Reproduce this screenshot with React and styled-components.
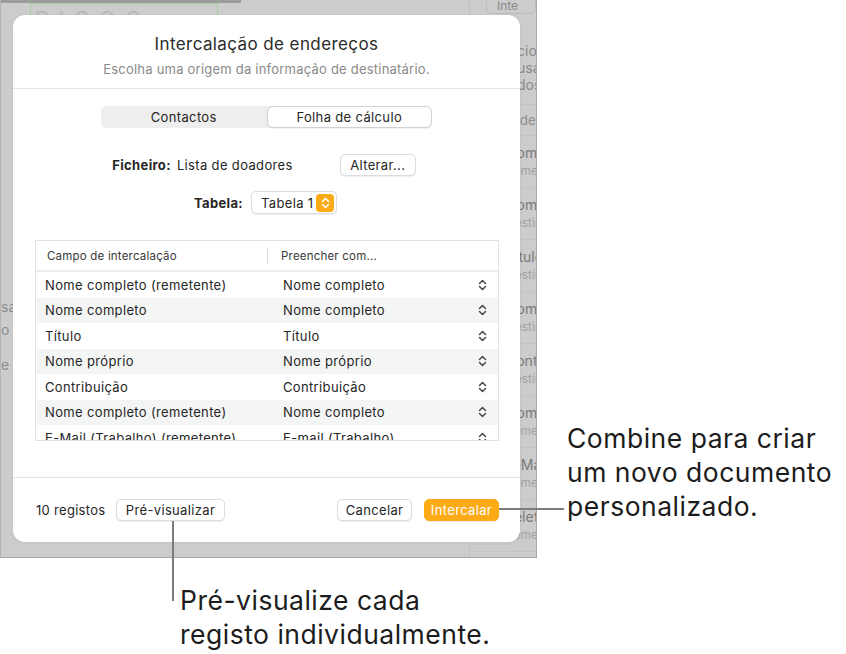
import React from 'react';
import styled, { createGlobalStyle } from 'styled-components';

const GlobalStyle = createGlobalStyle`
  body {
    margin: 0;
    background: #ffffff;
    font-family: Inter, "Liberation Sans", sans-serif;
    color: #262626;
  }
`;

const Stage = styled.div`
  position: relative;
  width: 846px;
  height: 654px;
  overflow: hidden;
  background: #ffffff;
`;

/* the dimmed app behind the sheet */
const Screen = styled.div`
  position: relative;
  width: 535px;
  height: 557px;
  display: flex;
  background: #cccccc;
  border-left: 1px solid #b4b4b4;
  border-right: 1px solid #a8a8a8;
  border-bottom: 1px solid #a8a8a8;
  overflow: hidden;
`;

const Canvas = styled.div`
  flex: 1;
  display: flex;
  flex-direction: column;
`;

const ScrollBar = styled.div`
  width: 240px;
  height: 3px;
  background: #9c9c9c;
`;

const TitleBox = styled.div`
  margin-left: 29px;
  width: 182px;
  height: 30px;
  border: 1px solid #a9c9a3;
  overflow: hidden;
  font-size: 22px;
  letter-spacing: 9px;
  color: #b9b9b9;
  line-height: 30px;
  padding-left: 4px;
`;

const DocFragments = styled.div`
  margin-top: 263px;
  display: flex;
  flex-direction: column;
  gap: 5px;
  font-size: 14px;
  color: #8c8c8c;
  line-height: 18px;
`;

const Sidebar = styled.div`
  width: 66px;
  border-left: 1px solid #c2c2c2;
  display: flex;
  flex-direction: column;
  position: relative;
`;

const SideButton = styled.div`
  margin: -6px 0 0 16px;
  height: 18px;
  border: 1px solid #bdbdbd;
  border-radius: 5px;
  font-size: 12px;
  color: #8a8a8a;
  padding-left: 10px;
  line-height: 22px;
`;

const SideIntro = styled.div`
  margin-top: 28px;
  padding-left: 47px;
  height: 62px;
  font-size: 14px;
  line-height: 17px;
  color: #8a8a8a;
  white-space: nowrap;
  border-bottom: 1px solid #c4c4c4;
`;

const SideSection = styled.div`
  height: 30px;
  line-height: 30px;
  font-size: 13px;
  color: #8e8e8e;
  padding-left: 50px;
  border-bottom: 1px solid #c4c4c4;
  white-space: nowrap;
`;

const SideItem = styled.div`
  height: 51px;
  border-bottom: 1px solid #c4c4c4;
  display: flex;
  align-items: center;
  gap: 14px;
  padding-left: 12px;
  white-space: nowrap;
`;

const Dot = styled.span`
  width: 10px;
  height: 10px;
  border-radius: 50%;
  background: ${p => (p.$on ? '#7cc06f' : 'transparent')};
  flex-shrink: 0;
`;

const SideText = styled.div`
  display: flex;
  flex-direction: column;
  font-size: 14px;
  line-height: 18px;
  color: #7a7a7a;

  small {
    font-size: 12px;
    color: #a2a2a2;
  }
`;

/* sheet */
const Sheet = styled.div`
  position: absolute;
  left: 12px;
  top: 15px;
  width: 507px;
  height: 527px;
  background: #ffffff;
  border-radius: 12px;
  display: flex;
  flex-direction: column;
  letter-spacing: 0.35px;
  box-shadow: 0 1px 4px rgba(0, 0, 0, 0.06);
`;

const Header = styled.div`
  height: 74px;
  box-sizing: border-box;
  padding-top: 18px;
  text-align: center;
  border-bottom: 1px solid #e4e4e4;
`;

const Title = styled.div`
  font-size: 17px;
  line-height: 22px;
  letter-spacing: 0.4px;
  color: #2b2b2b;
`;

const Subtitle = styled.div`
  margin-top: 6px;
  font-size: 13px;
  line-height: 16px;
  letter-spacing: 0.22px;
  color: #8a8a8a;
`;

const Body = styled.div`
  flex: 1;
  display: flex;
  flex-direction: column;
  align-items: center;
  padding-top: 17px;
`;

const Segmented = styled.div`
  display: flex;
  width: 331px;
  height: 22px;
  background: #eeeeee;
  border-radius: 6px;
`;

const Segment = styled.div`
  flex: 1;
  display: flex;
  align-items: center;
  justify-content: center;
  font-size: 13px;
  color: #262626;
  border-radius: 6px;
  box-sizing: border-box;
  background: ${p => (p.$active ? '#ffffff' : 'transparent')};
  border: 1px solid ${p => (p.$active ? '#d2d2d2' : 'transparent')};
  box-shadow: ${p => (p.$active ? '0 1px 1px rgba(0,0,0,0.06)' : 'none')};
`;

const FieldRow = styled.div`
  display: flex;
  align-items: center;
  margin-top: ${p => p.$top}px;
  margin-right: ${p => p.$shift || 0}px;
  font-size: 13px;
  color: #262626;
`;

const Label = styled.span`
  font-weight: 700;
  margin-right: ${p => p.$gap}px;
`;

const Button = styled.div`
  height: 22px;
  box-sizing: border-box;
  width: ${p => p.$w}px;
  display: inline-flex;
  align-items: center;
  justify-content: center;
  font-size: 13px;
  border-radius: 5px;
  color: ${p => (p.$primary ? '#ffffff' : '#262626')};
  background: ${p => (p.$primary ? '#fdaa17' : '#ffffff')};
  border: 1px solid ${p => (p.$primary ? '#fdaa17' : '#dcdcdc')};
  box-shadow: 0 1px 1px rgba(0, 0, 0, 0.07);
  margin-left: ${p => p.$ml || 0}px;
`;

const Select = styled.div`
  height: 23px;
  box-sizing: border-box;
  width: 86px;
  display: flex;
  align-items: center;
  justify-content: space-between;
  padding: 0 2px 0 9px;
  border: 1px solid #dcdcdc;
  border-radius: 5px;
  box-shadow: 0 1px 1px rgba(0, 0, 0, 0.07);
  font-size: 13px;
`;

const OrangeKnob = styled.span`
  width: 18px;
  height: 18px;
  border-radius: 4px;
  background: #fdaa17;
  display: flex;
  align-items: center;
  justify-content: center;
`;

const Table = styled.div`
  margin-top: 26px;
  align-self: stretch;
  margin-left: 22px;
  margin-right: 21px;
  border: 1px solid #e2e2e2;
  display: flex;
  flex-direction: column;
`;

const HeadRow = styled.div`
  display: grid;
  grid-template-columns: 232px 1fr;
  height: 29px;
  align-items: center;
  border-bottom: 2px solid #ececec;
  font-size: 11.5px;
  letter-spacing: 0.2px;
  color: #3a3a3a;
`;

const HeadCell = styled.div`
  padding-left: ${p => p.$pl}px;
  height: 16px;
  line-height: 16px;
  border-right: ${p => (p.$sep ? '1px solid #dcdcdc' : 'none')};
`;

const Rows = styled.div`
  height: 168px;
  overflow: hidden;
`;

const Row = styled.div`
  display: grid;
  grid-template-columns: 232px 1fr;
  height: 25.5px;
  align-items: center;
  font-size: 13px;
  color: #262626;
  background: ${p => (p.$alt ? '#f4f5f5' : '#ffffff')};
`;

const Cell = styled.div`
  padding-left: ${p => p.$pl}px;
  display: flex;
  align-items: center;
  justify-content: space-between;
  padding-right: 11px;
  white-space: nowrap;
`;

const Footer = styled.div`
  height: 65px;
  box-sizing: border-box;
  border-top: 1px solid #e4e4e4;
  display: flex;
  align-items: flex-start;
  padding: 21px 21px 0 23px;
  font-size: 13px;
`;

const Count = styled.span`
  line-height: 22px;
  width: 80px;
  letter-spacing: 0.3px;
`;

const Spacer = styled.div`
  flex: 1;
`;

/* callouts */
const HLine = styled.div`
  position: absolute;
  left: 499px;
  top: 508px;
  width: 65px;
  height: 2px;
  background: #7d7d7d;
`;

const VLine = styled.div`
  position: absolute;
  left: 172px;
  top: 521px;
  width: 2px;
  height: 80px;
  background: #7d7d7d;
`;

const Callout = styled.div`
  position: absolute;
  left: ${p => p.$x}px;
  top: ${p => p.$y}px;
  font-size: 26.5px;
  letter-spacing: 0.5px;
  line-height: 34px;
  color: #1c1c1c;
  white-space: nowrap;
`;

const Stepper = ({ color = '#4a4a4a' }) => (
  <svg width="9" height="12" viewBox="0 0 9 12" fill="none">
    <path d="M1.5 4.5 L4.5 1.5 L7.5 4.5" stroke={color} strokeWidth="1.5" strokeLinecap="round" strokeLinejoin="round" />
    <path d="M1.5 7.5 L4.5 10.5 L7.5 7.5" stroke={color} strokeWidth="1.5" strokeLinecap="round" strokeLinejoin="round" />
  </svg>
);

const rows = [
  ['Nome completo (remetente)', 'Nome completo'],
  ['Nome completo', 'Nome completo'],
  ['Título', 'Título'],
  ['Nome próprio', 'Nome próprio'],
  ['Contribuição', 'Contribuição'],
  ['Nome completo (remetente)', 'Nome completo'],
  ['E-Mail (Trabalho) (remetente)', 'E-mail (Trabalho)'],
];

const sideItems = [
  ['Nome completo', 'Remetente'],
  ['Nome completo', 'Destinatário'],
  ['Título', 'Destinatário'],
  ['Nome próprio', 'Destinatário'],
  ['Contribuição', 'Destinatário'],
  ['Nome completo', 'Remetente'],
  ['E-Mail', 'Remetente'],
  ['Telefone', 'Remetente'],
];

export default function App() {
  return (
    <Stage>
      <GlobalStyle />
      <Screen>
        <Canvas>
          <ScrollBar />
          <TitleBox>BIGOO BIGO</TitleBox>
          <DocFragments>
            <span>sa</span>
            <span>o</span>
            <span style={{ marginTop: 12 }}>e |</span>
          </DocFragments>
        </Canvas>
        <Sidebar>
          <SideButton>Inte</SideButton>
          <SideIntro>
            cionar
            <br />
            usa
            <br />
            dos
          </SideIntro>
          <SideSection>de</SideSection>
          {sideItems.map(([t, s], i) => (
            <SideItem key={i}>
              <Dot $on={i === sideItems.length - 1} />
              <SideText>
                <span>{t}</span>
                <small>{s}</small>
              </SideText>
            </SideItem>
          ))}
        </Sidebar>

        <Sheet>
          <Header>
            <Title>Intercalação de endereços</Title>
            <Subtitle>Escolha uma origem da informação de destinatário.</Subtitle>
          </Header>
          <Body>
            <Segmented>
              <Segment>Contactos</Segment>
              <Segment $active>Folha de cálculo</Segment>
            </Segmented>
            <FieldRow $top={26} $shift={5}>
              <Label $gap={6}>Ficheiro:</Label>
              <span>Lista de doadores</span>
              <Button $ml={47} $w={76}>Alterar...</Button>
            </FieldRow>
            <FieldRow $top={15} $shift={2}>
              <Label $gap={8}>Tabela:</Label>
              <Select>
                <span>Tabela 1</span>
                <OrangeKnob>
                  <Stepper color="#ffffff" />
                </OrangeKnob>
              </Select>
            </FieldRow>
            <Table>
              <HeadRow>
                <HeadCell $pl={11} $sep>Campo de intercalação</HeadCell>
                <HeadCell $pl={13}>Preencher com...</HeadCell>
              </HeadRow>
              <Rows>
                {rows.map(([a, b], i) => (
                  <Row key={i} $alt={i % 2 === 1}>
                    <Cell $pl={9}>{a}</Cell>
                    <Cell $pl={15}>
                      {b}
                      <Stepper />
                    </Cell>
                  </Row>
                ))}
              </Rows>
            </Table>
          </Body>
          <Footer>
            <Count>10 registos</Count>
            <Button $w={109}>Pré-visualizar</Button>
            <Spacer />
            <Button $w={75}>Cancelar</Button>
            <Button $w={75} $ml={12} $primary>Intercalar</Button>
          </Footer>
        </Sheet>
      </Screen>

      <HLine />
      <VLine />
      <Callout $x={567} $y={421}>
        Combine para criar
        <br />
        um novo documento
        <br />
        personalizado.
      </Callout>
      <Callout $x={180} $y={583}>
        Pré-visualize cada
        <br />
        registo individualmente.
      </Callout>
    </Stage>
  );
}
